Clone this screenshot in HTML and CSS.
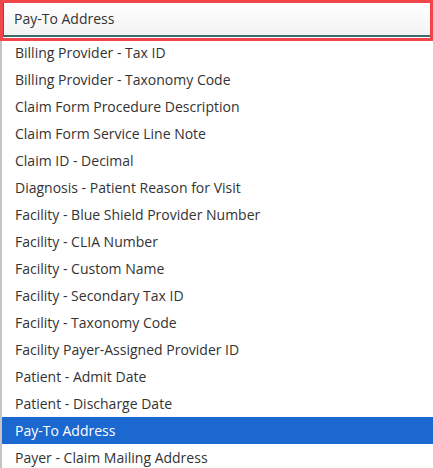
FILE: index.html
```html
<!DOCTYPE html>
<html>
<head>
<meta charset="utf-8">
<link rel="stylesheet" href="styles.css">
</head>
<body>
<div class="select">
  <div class="focus-ring">
    <div class="input">Pay-To Address</div>
  </div>
  <ul class="options">
    <li>Billing Provider - Tax ID</li>
    <li>Billing Provider - Taxonomy Code</li>
    <li>Claim Form Procedure Description</li>
    <li>Claim Form Service Line Note</li>
    <li>Claim ID - Decimal</li>
    <li>Diagnosis - Patient Reason for Visit</li>
    <li>Facility - Blue Shield Provider Number</li>
    <li>Facility - CLIA Number</li>
    <li>Facility - Custom Name</li>
    <li>Facility - Secondary Tax ID</li>
    <li>Facility - Taxonomy Code</li>
    <li>Facility Payer-Assigned Provider ID</li>
    <li>Patient - Admit Date</li>
    <li>Patient - Discharge Date</li>
    <li class="selected">Pay-To Address</li>
    <li>Payer - Claim Mailing Address</li>
  </ul>
</div>
</body>
</html>
```
FILE: styles.css
```css
html, body {
  margin: 0;
  padding: 0;
  background: #ffffff;
  overflow: hidden;
}
body {
  font-family: "Open Sans", "Noto Sans", sans-serif;
  font-size: 14px;
  color: #333333;
}
.select {
  width: 433px;
  height: 468px;
  overflow: hidden;
}
.focus-ring {
  position: relative;
  z-index: 1;
  border: 3px solid #f2474a;
  height: 35px;
}
.input {
  height: 32px;
  border-left: 1px solid #3d6b6b;
  border-bottom: 2px solid #3d6b6b;
  background: linear-gradient(#ffffff, #f3f3f3);
  padding-left: 10px;
  line-height: 31px;
}
.options {
  list-style: none;
  margin: -2px 0 0;
  padding: 0;
  border-left: 2px solid #c4c4c4;
}
.options li {
  height: 27px;
  line-height: 27px;
  padding-left: 13px;
  white-space: nowrap;
}
.options li.selected {
  background: #1c68d1;
  color: #ffffff;
}
```
